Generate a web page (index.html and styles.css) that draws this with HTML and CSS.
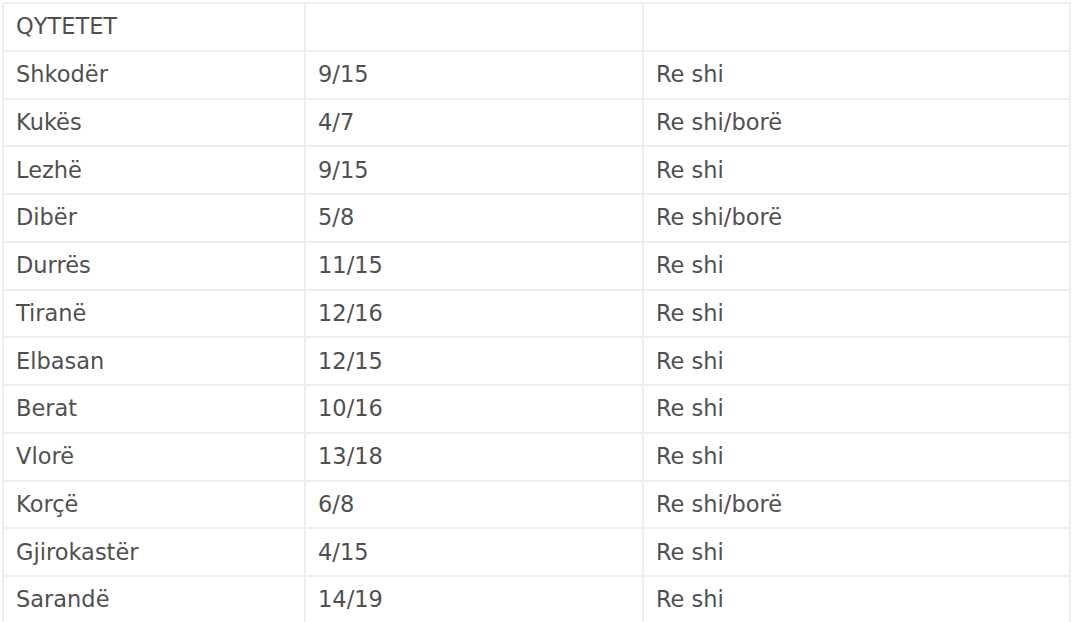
FILE: index.html
```html
<!DOCTYPE html>
<html lang="sq">
<head>
<meta charset="utf-8">
<title>Qytetet</title>
<link rel="stylesheet" href="styles.css">
</head>
<body>
<table class="weather">
  <colgroup>
    <col class="c1"><col class="c2"><col class="c3">
  </colgroup>
  <tbody>
    <tr><td>QYTETET</td><td></td><td></td></tr>
    <tr><td>Shkodër</td><td>9/15</td><td>Re shi</td></tr>
    <tr><td>Kukës</td><td>4/7</td><td>Re shi/borë</td></tr>
    <tr><td>Lezhë</td><td>9/15</td><td>Re shi</td></tr>
    <tr><td>Dibër</td><td>5/8</td><td>Re shi/borë</td></tr>
    <tr><td>Durrës</td><td>11/15</td><td>Re shi</td></tr>
    <tr><td>Tiranë</td><td>12/16</td><td>Re shi</td></tr>
    <tr><td>Elbasan</td><td>12/15</td><td>Re shi</td></tr>
    <tr><td>Berat</td><td>10/16</td><td>Re shi</td></tr>
    <tr><td>Vlorë</td><td>13/18</td><td>Re shi</td></tr>
    <tr><td>Korçë</td><td>6/8</td><td>Re shi/borë</td></tr>
    <tr><td>Gjirokastër</td><td>4/15</td><td>Re shi</td></tr>
    <tr><td>Sarandë</td><td>14/19</td><td>Re shi</td></tr>
  </tbody>
</table>
</body>
</html>
```
FILE: styles.css
```css
html, body {
  margin: 0;
  padding: 0;
  background: #ffffff;
}
body {
  padding: 2px 0 0 2px;
  font-family: "DejaVu Sans", Verdana, sans-serif;
  font-size: 22.5px;
  color: #505050;
}
.weather {
  border-collapse: collapse;
  width: 1067px;
  table-layout: fixed;
}
.c1 { width: 302px; }
.c2 { width: 338px; }
.c3 { width: 427px; }
.weather td {
  border: 2px solid #eeeeee;
  height: 45.75px;
  padding: 0 0 0 12px;
  vertical-align: middle;
  white-space: nowrap;
  line-height: 1.2;
}
```
